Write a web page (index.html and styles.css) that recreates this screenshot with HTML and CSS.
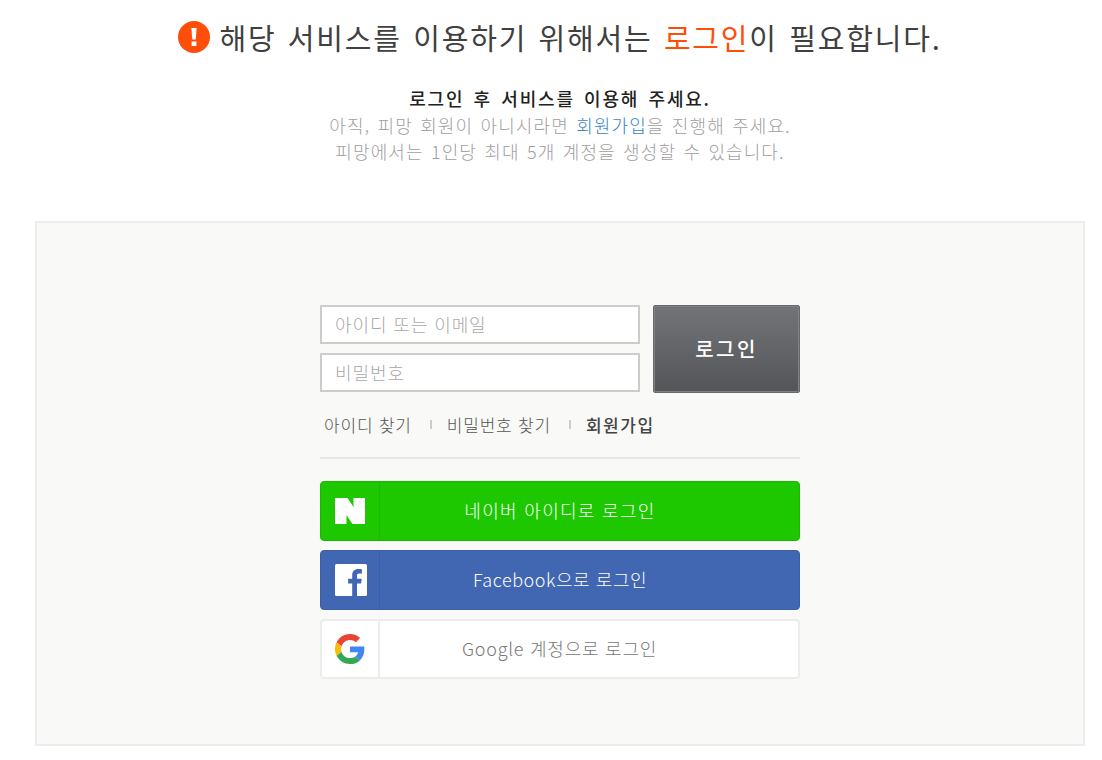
FILE: index.html
```html
<!DOCTYPE html>
<html lang="ko">

<head>
  <meta charset="UTF-8">
  <meta name="viewport" content="width=device-width, initial-scale=1.0">
  <title>로그인</title>
  <link rel="stylesheet" href="styles.css">
</head>

<body>
  <div class="notice">
    <h1 class="notice-title">
      <svg class="notice-icon" width="32" height="32" viewBox="0 0 32 32">
        <circle cx="16" cy="16" r="16" fill="#ff4e0a" />
        <path d="M13.400 7h5.200l-.8 11.500h-3.600z" fill="#fff" />
        <rect x="13.600" y="20.500" width="4.800" height="4.500" fill="#fff" />
      </svg>
      <span>해당 서비스를 이용하기 위해서는 <span class="accent">로그인</span>이 필요합니다.</span>
    </h1>
    <p class="notice-lead">로그인 후 서비스를 이용해 주세요.</p>
    <p class="notice-text">아직, 피망 회원이 아니시라면 <a href="#" class="link">회원가입</a>을 진행해 주세요.</p>
    <p class="notice-text">피망에서는 1인당 최대 5개 계정을 생성할 수 있습니다.</p>
  </div>

  <div class="login-box">
    <div class="login-inner">
      <div class="login-form">
        <div class="login-inputs">
          <input type="text" class="login-input" placeholder="아이디 또는 이메일">
          <input type="password" class="login-input" placeholder="비밀번호">
        </div>
        <button class="login-button">로그인</button>
      </div>

      <div class="login-links">
        <a href="#">아이디 찾기</a>
        <span class="sep"></span>
        <a href="#">비밀번호 찾기</a>
        <span class="sep"></span>
        <a href="#" class="strong">회원가입</a>
      </div>

      <a href="#" class="social naver">
        <span class="social-icon">
          <svg width="30" height="26" viewBox="0 0 30 26">
            <path d="M0 0h12.500l6 9V0H30v26H17.500l-6-9v9H0z" fill="#fff" />
          </svg>
        </span>
        <span class="social-label">네이버 아이디로 로그인</span>
      </a>
      <a href="#" class="social facebook">
        <span class="social-icon">
          <svg width="32" height="32" viewBox="0 0 32 32">
            <rect width="32" height="32" rx="1.500" fill="#fff" />
            <path d="M22 32V19.600h4.100l.6-4.800H22v-3c0-1.400.4-2.300 2.400-2.300h2.500V5.200c-.4-.1-1.900-.2-3.600-.2-3.600 0-6.100 2.200-6.100 6.300v3.500h-4.100v4.800h4.100V32z" fill="#4267b2" />
          </svg>
        </span>
        <span class="social-label">Facebook으로 로그인</span>
      </a>
      <a href="#" class="social google">
        <span class="social-icon">
          <svg width="30" height="30" viewBox="0 0 48 48">
            <path fill="#ea4335" d="M24 9.500c3.500 0 6.700 1.200 9.200 3.600l6.900-6.900C35.900 2.400 30.500 0 24 0 14.600 0 6.500 5.400 2.600 13.200l8 6.200C12.400 13.600 17.700 9.500 24 9.500z" />
            <path fill="#4285f4" d="M47 24.500c0-1.600-.1-3.100-.4-4.500H24v9h13c-.6 3-2.300 5.500-4.800 7.200l7.700 6C44.400 38 47 31.800 47 24.500z" />
            <path fill="#fbbc05" d="M10.500 28.600c-.5-1.400-.8-3-.8-4.600s.3-3.200.8-4.600l-8-6.200C.9 16.500 0 20.100 0 24s.9 7.500 2.600 10.800z" />
            <path fill="#34a853" d="M24 48c6.500 0 11.900-2.100 15.900-5.800l-7.700-6c-2.200 1.500-4.900 2.300-8.200 2.300-6.300 0-11.600-4.200-13.500-9.900l-8 6.200C6.500 42.600 14.600 48 24 48z" />
          </svg>
        </span>
        <span class="social-label">Google 계정으로 로그인</span>
      </a>
    </div>
  </div>
</body>

</html>
```

FILE: styles.css
```css
body {
  margin: 0;
  padding: 0 17px 0 35px;
  background-color: #ffffff;
  font-family: "Noto Sans CJK KR", "Liberation Sans", sans-serif;
  color: #444444;
}

a {
  text-decoration: none;
}

.notice {
  text-align: center;
  padding-top: 17px;
  height: 221px;
  box-sizing: border-box;
}

.notice-title {
  margin: 0 0 28px;
  font-size: 29px;
  font-weight: 400;
  line-height: 40px;
  letter-spacing: 1.800px;
  word-spacing: 1.500px;
  color: #404040;
  display: flex;
  justify-content: center;
  align-items: center;
}

.notice-icon {
  margin-right: 9px;
  flex: none;
}

.accent {
  color: #ff4e0a;
}

.notice-lead,
.notice-text {
  margin: 0;
  font-size: 18px;
  line-height: 26.500px;
  font-weight: 300;
  letter-spacing: 1.100px;
  word-spacing: 1.200px;
}

.notice-lead {
  color: #222222;
  font-weight: 500;
  letter-spacing: 1.800px;
  word-spacing: 2.500px;
}

.notice-text {
  color: #a0a0a0;
}

.link {
  color: #3a85c6;
}

.login-box {
  height: 525px;
  box-sizing: border-box;
  background-color: #f9f9f7;
  border: 2px solid #ededed;
  padding-top: 82px;
}

.login-inner {
  width: 480px;
  margin: 0 auto;
}

.login-form {
  display: flex;
  justify-content: space-between;
}

.login-inputs {
  width: 320px;
  display: flex;
  flex-direction: column;
  gap: 9px;
}

.login-input {
  width: 100%;
  height: 39px;
  box-sizing: border-box;
  padding: 0 13px 2px;
  border: 2px solid #cccccc;
  background-color: #ffffff;
  font-family: inherit;
  font-size: 18px;
  font-weight: 300;
  letter-spacing: 0.900px;
  outline: none;
}

.login-input::placeholder {
  color: #a8a8a8;
}

.login-button {
  width: 147px;
  height: 88px;
  padding: 0 0 2px;
  border: 1px solid #68696b;
  border-radius: 2px;
  box-shadow: inset 0 0 0 1px #808183;
  background: linear-gradient(#737477, #545558);
  color: #ffffff;
  font-family: inherit;
  font-size: 20px;
  font-weight: 500;
  letter-spacing: 2.500px;
}

.login-links {
  display: flex;
  align-items: center;
  height: 66px;
  padding: 0 0 2px 4px;
  margin-bottom: 22px;
  border-bottom: 2px solid #e6e6e6;
  box-sizing: border-box;
  font-size: 17px;
  font-weight: 300;
  letter-spacing: 0.800px;
}

.login-links a {
  color: #555555;
}

.login-links a.strong {
  color: #444444;
  font-weight: 500;
  letter-spacing: 1.500px;
}

.sep {
  width: 2px;
  height: 9px;
  margin: 0 15px 0 18px;
  background-color: #cccccc;
}

.social {
  display: flex;
  height: 60px;
  box-sizing: border-box;
  margin-bottom: 9px;
  border-radius: 4px;
  border: 1px solid transparent;
  font-size: 18px;
  font-weight: 300;
}

.social-icon {
  width: 59px;
  flex: none;
  display: flex;
  align-items: center;
  justify-content: center;
  border-right: 1px solid transparent;
  box-sizing: border-box;
}

.social-label {
  flex: 1;
  display: flex;
  align-items: center;
  justify-content: center;
  padding: 0 59px 2px 0;
}

.naver {
  background-color: #1ec800;
  border-color: #1ab800;
  color: #ffffff;
  letter-spacing: 1.300px;
}

.naver .social-icon {
  border-right-color: #1ab800;
}

.facebook {
  background-color: #4267b2;
  border-color: #3c5ea3;
  color: #ffffff;
  letter-spacing: 0.550px;
}

.facebook .social-icon {
  padding-left: 2px;
  border-right-color: #3c5ea3;
}

.google {
  background-color: #ffffff;
  border: 2px solid #ececec;
  color: #777777;
  letter-spacing: 0.750px;
}

.google .social-icon {
  border-right: 2px solid #ececec;
  width: 58px;
}
```
